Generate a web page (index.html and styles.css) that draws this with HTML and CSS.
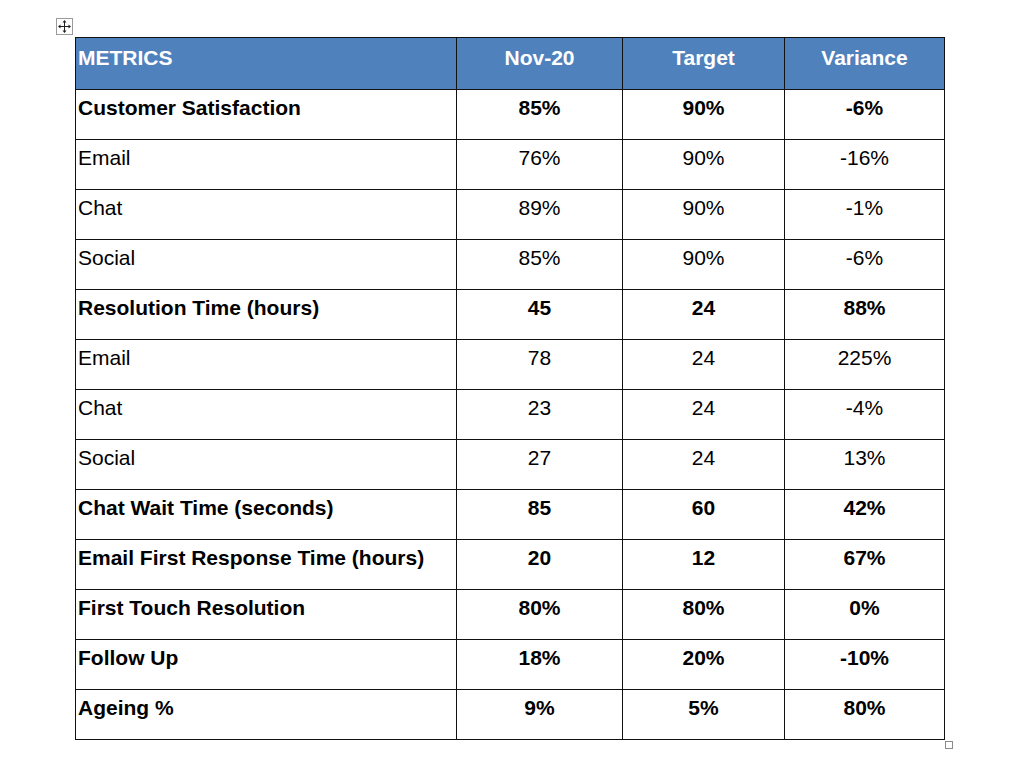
FILE: index.html
```html
<!DOCTYPE html>
<html>
<head>
<meta charset="utf-8">
<link rel="stylesheet" href="styles.css">
</head>
<body>
<div class="page">
  <div class="move-handle">
    <svg width="15" height="15" viewBox="0 0 15 15">
      <path d="M7.5 2 V13 M2 7.5 H13" stroke="#222" stroke-width="1" fill="none"/>
      <path d="M7.5 1 L5.5 3.5 H9.5 Z M7.5 14 L5.5 11.5 H9.5 Z M1 7.5 L3.5 5.5 V9.5 Z M14 7.5 L11.5 5.5 V9.5 Z" fill="#222"/>
    </svg>
  </div>
  <table class="metrics">
    <colgroup>
      <col class="c-name">
      <col class="c-nov">
      <col class="c-target">
      <col class="c-var">
    </colgroup>
    <thead>
      <tr>
        <th class="name">METRICS</th>
        <th>Nov-20</th>
        <th>Target</th>
        <th>Variance</th>
      </tr>
    </thead>
    <tbody>
      <tr class="bold"><td class="name">Customer Satisfaction</td><td>85%</td><td>90%</td><td>-6%</td></tr>
      <tr><td class="name">Email</td><td>76%</td><td>90%</td><td>-16%</td></tr>
      <tr><td class="name">Chat</td><td>89%</td><td>90%</td><td>-1%</td></tr>
      <tr><td class="name">Social</td><td>85%</td><td>90%</td><td>-6%</td></tr>
      <tr class="bold"><td class="name">Resolution Time (hours)</td><td>45</td><td>24</td><td>88%</td></tr>
      <tr><td class="name">Email</td><td>78</td><td>24</td><td>225%</td></tr>
      <tr><td class="name">Chat</td><td>23</td><td>24</td><td>-4%</td></tr>
      <tr><td class="name">Social</td><td>27</td><td>24</td><td>13%</td></tr>
      <tr class="bold"><td class="name">Chat Wait Time (seconds)</td><td>85</td><td>60</td><td>42%</td></tr>
      <tr class="bold"><td class="name">Email First Response Time (hours)</td><td>20</td><td>12</td><td>67%</td></tr>
      <tr class="bold"><td class="name">First Touch Resolution</td><td>80%</td><td>80%</td><td>0%</td></tr>
      <tr class="bold"><td class="name">Follow Up</td><td>18%</td><td>20%</td><td>-10%</td></tr>
      <tr class="bold"><td class="name">Ageing %</td><td>9%</td><td>5%</td><td>80%</td></tr>
    </tbody>
  </table>
  <div class="resize-handle"></div>
</div>
</body>
</html>
```

FILE: styles.css
```css
html, body {
  margin: 0;
  padding: 0;
  background: #ffffff;
}

body {
  font-family: "Liberation Sans", Arial, sans-serif;
  color: #000;
}

.page {
  position: relative;
  width: 1024px;
  height: 783px;
  padding: 37px 0 0 75px;
  box-sizing: border-box;
}

.move-handle {
  position: absolute;
  left: 56px;
  top: 18px;
  width: 15px;
  height: 15px;
  border: 1px solid #9a9a9a;
  background: #fff;
  box-sizing: content-box;
}

.move-handle svg {
  display: block;
}

.resize-handle {
  position: absolute;
  left: 945px;
  top: 741px;
  width: 6px;
  height: 6px;
  border: 1px solid #8a8a8a;
  background: #fff;
}

.metrics {
  border-collapse: collapse;
  table-layout: fixed;
  width: 869px;
  font-size: 21px;
}

.c-name { width: 381px; }
.c-nov { width: 166px; }
.c-target { width: 162px; }
.c-var { width: 160px; }

.metrics th,
.metrics td {
  border: 1px solid #111;
  height: 50px;
  padding: 6px 2px 0 2px;
  box-sizing: border-box;
  vertical-align: top;
  text-align: center;
  line-height: 24px;
  white-space: nowrap;
}

.metrics th {
  height: 52px;
  padding-top: 8px;
  background: #4f81bd;
  color: #fff;
  font-weight: bold;
}

.metrics .name {
  text-align: left;
}

.metrics tr.bold td {
  font-weight: bold;
}
```
